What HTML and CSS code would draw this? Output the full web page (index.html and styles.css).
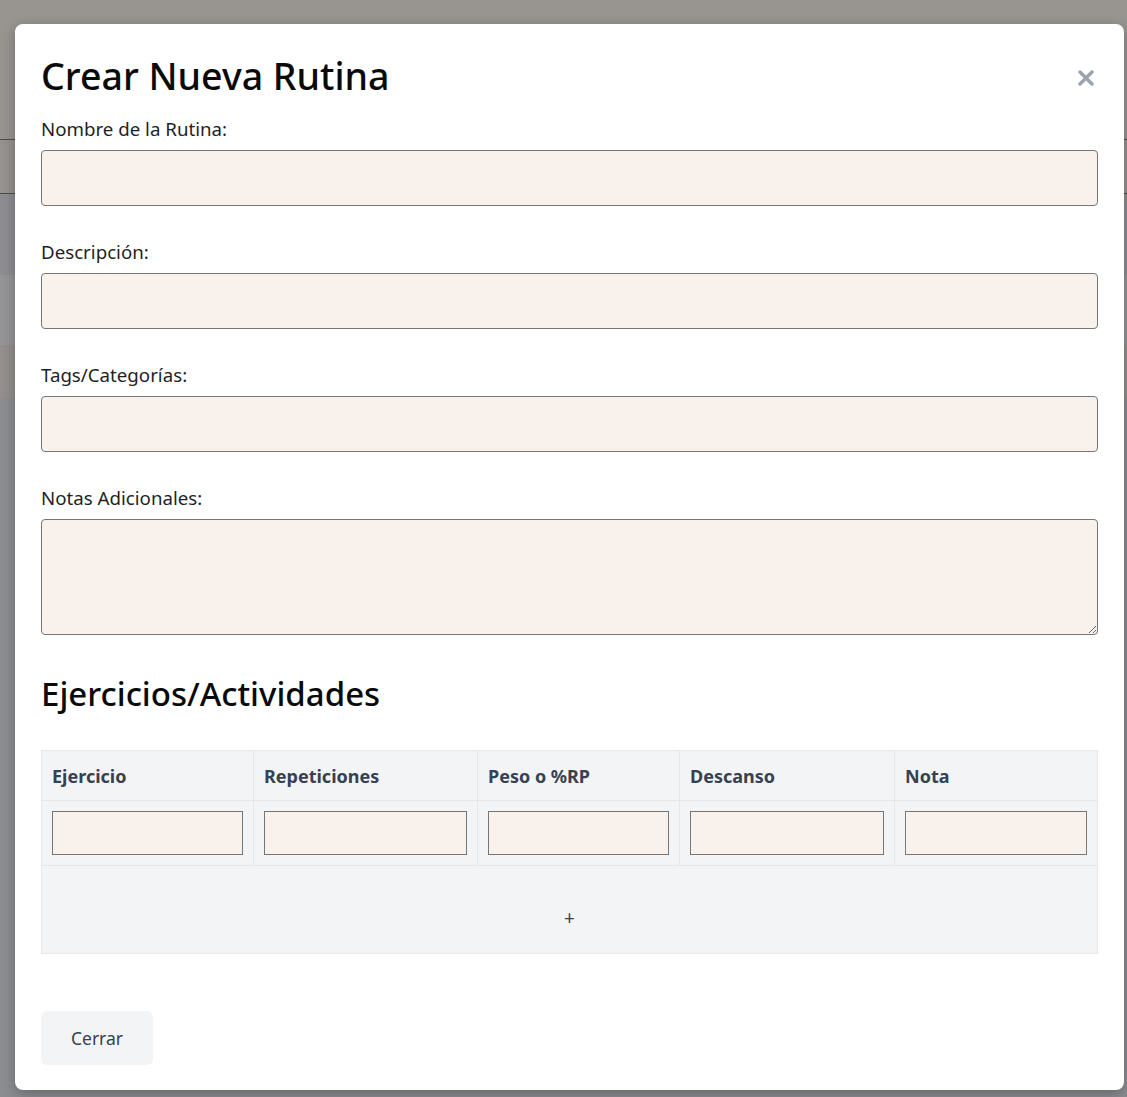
FILE: index.html
```html
<!DOCTYPE html>
<html lang="es">
<head>
<meta charset="utf-8">
<title>Crear Nueva Rutina</title>
<link rel="stylesheet" href="styles.css">
</head>
<body>
<div class="modal">
  <div class="modal-header">
    <h2 class="title">Crear Nueva Rutina</h2>
    <button class="close" type="button" aria-label="Cerrar">
      <svg width="16" height="16" viewBox="0 0 16 16"><path d="M2 2 L14 14 M14 2 L2 14" stroke="#9ca3af" stroke-width="3.4" stroke-linecap="round" fill="none"/></svg>
    </button>
  </div>
  <div class="field">
    <label class="label">Nombre de la Rutina:</label>
    <input class="input" type="text">
  </div>
  <div class="field">
    <label class="label">Descripción:</label>
    <input class="input" type="text">
  </div>
  <div class="field">
    <label class="label">Tags/Categorías:</label>
    <input class="input" type="text">
  </div>
  <div class="field">
    <label class="label">Notas Adicionales:</label>
    <textarea class="input textarea"></textarea>
  </div>
  <h3 class="section-title">Ejercicios/Actividades</h3>
  <table class="table">
    <colgroup>
      <col class="c1"><col class="c2"><col class="c3"><col class="c4"><col class="c5">
    </colgroup>
    <thead>
      <tr class="head-row">
        <th>Ejercicio</th>
        <th>Repeticiones</th>
        <th>Peso o %RP</th>
        <th>Descanso</th>
        <th>Nota</th>
      </tr>
    </thead>
    <tbody>
      <tr class="data-row">
        <td><input class="cell-input" type="text"></td>
        <td><input class="cell-input" type="text"></td>
        <td><input class="cell-input" type="text"></td>
        <td><input class="cell-input" type="text"></td>
        <td><input class="cell-input" type="text"></td>
      </tr>
      <tr class="add-row">
        <td colspan="5"><button class="add" type="button">+</button></td>
      </tr>
    </tbody>
  </table>
  <button class="btn" type="button">Cerrar</button>
</div>
</body>
</html>
```

FILE: styles.css
```css
html, body {
  margin: 0;
  padding: 0;
}

body {
  height: 1097px;
  overflow: hidden;
  font-family: "Noto Sans", "Open Sans", "Liberation Sans", sans-serif;
  background: linear-gradient(to bottom,
    #989490 0, #989490 139px,
    #4e4c4b 139px, #4e4c4b 140px,
    #969290 140px, #969290 193px,
    #4e4c4b 193px, #4e4c4b 194px,
    #8e8e92 194px, #8e8e92 275px,
    #959598 275px, #959598 345px,
    #948f8c 345px, #948f8c 398px,
    #8c8d91 398px, #8c8d91 100%);
}

.modal {
  box-sizing: border-box;
  width: 1109px;
  height: 1066px;
  margin: 24px 0 0 15px;
  padding: 29px 26px 25px 26px;
  background: #ffffff;
  border-radius: 8px;
  box-shadow: 0 4px 14px rgba(0, 0, 0, 0.28);
}

.modal-header {
  display: flex;
  align-items: center;
  justify-content: space-between;
  margin-bottom: 18px;
}

.title {
  margin: 0;
  font-size: 37.5px;
  line-height: 46px;
  font-weight: 500;
  color: #0a0a0a;
}

.close {
  display: flex;
  padding: 0;
  margin: 4px 4px 0 0;
  border: none;
  background: none;
  cursor: pointer;
}

.field {
  margin-bottom: 34px;
}

.label {
  display: block;
  font-size: 18.7px;
  line-height: 24px;
  color: #1f1f1f;
  margin-bottom: 9px;
}

.input {
  display: block;
  box-sizing: border-box;
  width: 100%;
  height: 56px;
  margin: 0;
  border: 1px solid #767676;
  border-radius: 4px;
  background: #f9f1ec;
  font-family: inherit;
  font-size: 16px;
}

.textarea {
  height: 116px;
  resize: vertical;
}

.section-title {
  margin: 38px 0 35px 0;
  font-size: 33px;
  line-height: 42px;
  font-weight: 500;
  color: #0a0a0a;
}

.table {
  width: 1057px;
  table-layout: fixed;
  border-collapse: collapse;
  background: #f3f4f6;
  border: 1px solid #e5e7eb;
}

.c1 { width: 212px; }
.c2 { width: 224px; }
.c3 { width: 202px; }
.c4 { width: 215px; }
.c5 { width: 203px; }

.table th,
.table td {
  border: 1px solid #e5e7eb;
}

.head-row th {
  height: 49px;
  padding: 0 10px;
  text-align: left;
  font-size: 18px;
  font-weight: 700;
  color: #374151;
}

.data-row td {
  height: 44px;
  padding: 10px;
}

.cell-input {
  display: block;
  box-sizing: border-box;
  width: 100%;
  height: 44px;
  margin: 0;
  border: 1px solid #767676;
  border-radius: 0;
  background: #f9f1ec;
}

.add-row td {
  height: 71px;
  padding: 16px 0 0 0;
  text-align: center;
  vertical-align: middle;
}

.add {
  border: none;
  background: none;
  padding: 0;
  font-family: inherit;
  font-size: 19px;
  line-height: 24px;
  color: #374151;
  cursor: pointer;
}

.btn {
  display: block;
  margin-top: 57px;
  width: 112px;
  height: 54px;
  border: none;
  border-radius: 6px;
  background: #f3f4f6;
  font-family: inherit;
  font-size: 17.5px;
  color: #374151;
  cursor: pointer;
}
```
